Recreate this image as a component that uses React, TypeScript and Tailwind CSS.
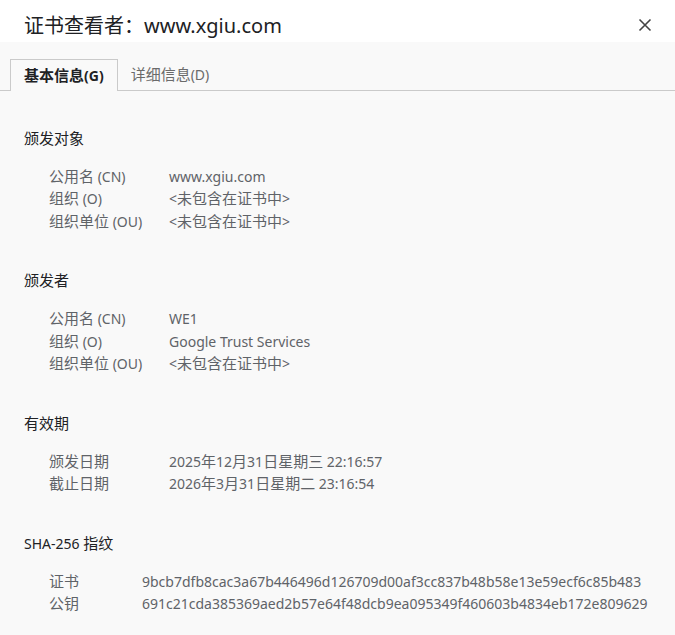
import { Fragment } from "react";

const FONT = { fontFamily: '"Noto Sans", "Noto Sans CJK SC", sans-serif' };

// CJK glyphs in the reference are a touch wider than Noto CJK at 14px
function Cjk({ text, size = "text-[15px]" }: { text: string; size?: string }) {
  const parts = text.split(/([\u3000-\u9fff\uff00-\uffef]+)/);
  return (
    <>
      {parts.map((p, i) =>
        /[\u3000-\u9fff\uff00-\uffef]/.test(p) ? (
          <span key={i} className={size + " leading-none"}>
            {p}
          </span>
        ) : (
          <Fragment key={i}>{p}</Fragment>
        )
      )}
    </>
  );
}

const sections = [
  {
    title: "颁发对象",
    valueCol: "w-[120px]",
    rows: [
      ["公用名 (CN)", "www.xgiu.com"],
      ["组织 (O)", "<未包含在证书中>"],
      ["组织单位 (OU)", "<未包含在证书中>"],
    ],
  },
  {
    title: "颁发者",
    valueCol: "w-[120px]",
    rows: [
      ["公用名 (CN)", "WE1"],
      ["组织 (O)", "Google Trust Services"],
      ["组织单位 (OU)", "<未包含在证书中>"],
    ],
  },
  {
    title: "有效期",
    valueCol: "w-[120px]",
    rows: [
      ["颁发日期", "2025年12月31日星期三 22:16:57"],
      ["截止日期", "2026年3月31日星期二 23:16:54"],
    ],
  },
  {
    title: "SHA-256 指纹",
    valueCol: "w-[93px]",
    rows: [
      ["证书", "9bcb7dfb8cac3a67b446496d126709d00af3cc837b48b58e13e59ecf6c85b483"],
      ["公钥", "691c21cda385369aed2b57e64f48dcb9ea095349f460603b4834eb172e809629"],
    ],
  },
];

export default function App() {
  return (
    <div className="w-[675px] h-[635px] bg-[#f9f9f9] overflow-hidden flex flex-col" style={FONT}>
      {/* Title bar */}
      <div className="h-[42px] bg-white flex items-start justify-between pl-[24px] pr-[23px] shrink-0">
        <h1 className="text-[20px] leading-[26px] text-[#202124] mt-[13px]">
          <Cjk text="证书查看者：" size="text-[20px]" />
          www.xgiu.com
        </h1>
        <svg width="14" height="14" viewBox="0 0 14 14" className="mt-[18px]">
          <path d="M1.5 1.5 L12.5 12.5 M12.5 1.5 L1.5 12.5" stroke="#444" strokeWidth="1.6" />
        </svg>
      </div>

      {/* Tabs */}
      <div className="flex items-end pl-[10px] pt-[17px] border-b border-[#cacaca] shrink-0">
        <div className="h-[32px] px-[13px] flex items-center border border-b-0 border-[#cacaca] bg-[#f9f9f9] -mb-px text-[14px] font-bold text-[#202124]">
          <Cjk text="基本信息" />
          (G)
        </div>
        <div className="h-[31px] px-[13px] flex items-center text-[14px] text-[#6b6b6b]">
          <Cjk text="详细信息" />
          (D)
        </div>
      </div>

      {/* Content */}
      <div className="pl-[24px] pt-[37px] flex flex-col gap-[38px]">
        {sections.map((s) => (
          <section key={s.title}>
            <h2 className="h-[20px] flex items-center text-[14px] text-[#202124]">
              <span>
                <Cjk text={s.title} />
              </span>
            </h2>
            <div className="mt-[17px] pl-[25px]">
              {s.rows.map(([k, v]) => (
                <div key={k} className="h-[22.5px] flex items-center text-[14px] text-[#5f6368]">
                  <span className={s.valueCol + " shrink-0"}>
                    <Cjk text={k} />
                  </span>
                  <span className="whitespace-nowrap">
                    <Cjk text={v} />
                  </span>
                </div>
              ))}
            </div>
          </section>
        ))}
      </div>
    </div>
  );
}
